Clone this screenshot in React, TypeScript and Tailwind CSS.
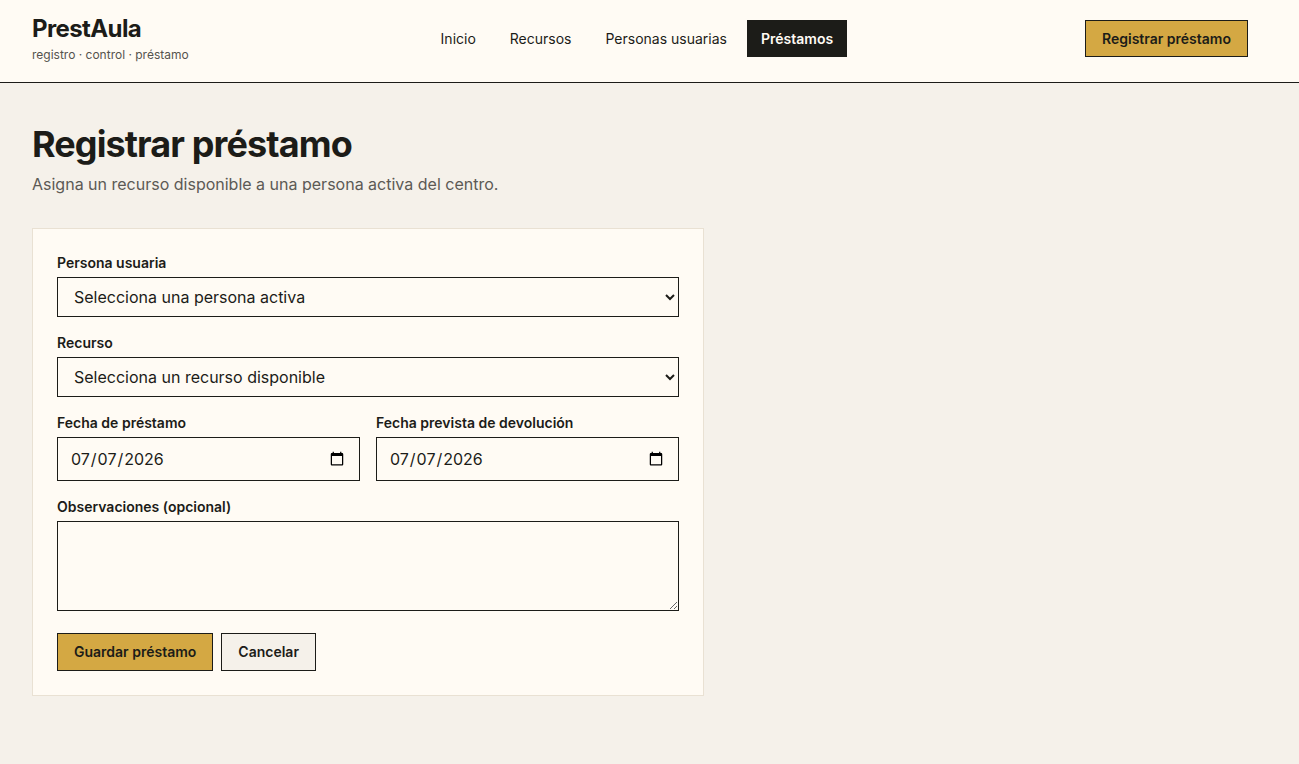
const navItems = ['Inicio', 'Recursos', 'Personas usuarias', 'Préstamos'];

export default function App() {
  const active = 'Préstamos';

  return (
    <div className="min-h-screen bg-[#f5f1ea] text-[#1c1c18] font-['Inter',sans-serif]">
      <header className="h-[83px] flex items-start justify-between pt-[14px] pl-8 pr-[51px] bg-[#fffbf4] border-b border-[#1c1c18]">
        <div>
          <div className="text-2xl leading-[30px] font-bold tracking-tight">PrestAula</div>
          <div className="mt-[3px] text-xs leading-4 text-[#55534e]">registro · control · préstamo</div>
        </div>
        <nav className="mt-[6px] flex items-center gap-1.5 text-sm">
          {navItems.map((item) => (
            <a
              key={item}
              className={`h-[37px] px-3.5 flex items-center ${
                item === active ? 'bg-[#1c1c18] text-[#fffbf4] font-semibold' : 'font-normal'
              }`}
            >
              {item}
            </a>
          ))}
        </nav>
        <button className="mt-[6px] h-[37px] px-4 bg-[#d4a843] border border-[#1c1c18] text-sm font-semibold">
          Registrar préstamo
        </button>
      </header>

      <main className="pl-8 pt-[41px] pb-16">
        <h1 className="text-4xl leading-10 font-bold tracking-tight">Registrar préstamo</h1>
        <p className="mt-2 text-base leading-6 text-[#5c5a55]">
          Asigna un recurso disponible a una persona activa del centro.
        </p>

        <form className="mt-8 w-[672px] bg-[#fffbf4] border border-[#e9e1d3] p-6 flex flex-col gap-4">
          <div>
            <label className="block text-sm leading-5 font-semibold mb-1">Persona usuaria</label>
            <select className="w-full h-10 px-3 border border-[#1c1c18] text-base bg-[#fffbf4]">
              <option>Selecciona una persona activa</option>
            </select>
          </div>
          <div>
            <label className="block text-sm leading-5 font-semibold mb-1">Recurso</label>
            <select className="w-full h-10 px-3 border border-[#1c1c18] text-base bg-[#fffbf4]">
              <option>Selecciona un recurso disponible</option>
            </select>
          </div>
          <div className="grid grid-cols-2 gap-4">
            <div>
              <label className="block text-sm leading-5 font-semibold mb-1">Fecha de préstamo</label>
              <input
                type="date"
                defaultValue="2026-07-07"
                className="w-full h-11 px-3 border border-[#1c1c18] text-base bg-[#fffbf4]"
              />
            </div>
            <div>
              <label className="block text-sm leading-5 font-semibold mb-1">Fecha prevista de devolución</label>
              <input
                type="date"
                defaultValue="2026-07-07"
                className="w-full h-11 px-3 border border-[#1c1c18] text-base bg-[#fffbf4]"
              />
            </div>
          </div>
          <div>
            <label className="block text-sm leading-5 font-semibold mb-1">Observaciones (opcional)</label>
            <textarea className="block w-full h-[90px] px-3 py-2 border border-[#1c1c18] text-base bg-[#fffbf4]" />
          </div>
          <div className="mt-1.5 flex gap-2">
            <button type="button" className="h-[38px] px-4 bg-[#d4a843] border border-[#1c1c18] text-sm font-semibold">
              Guardar préstamo
            </button>
            <button type="button" className="h-[38px] px-4 bg-[#f5f1ea] border border-[#1c1c18] text-sm font-semibold">
              Cancelar
            </button>
          </div>
        </form>
      </main>
    </div>
  );
}
